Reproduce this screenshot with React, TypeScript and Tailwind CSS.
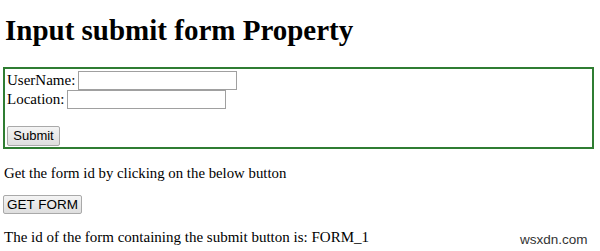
import React from "react";

export default function App() {
  return (
    <div className="relative w-[600px] h-[251px] bg-white overflow-hidden text-black" style={{ fontFamily: '"Liberation Serif", "Times New Roman", serif' }}>
      <div className="pl-[4px] pt-[14px]">
        <h1 className="text-[29px] font-bold leading-[32px] pl-[1px] m-0">Input submit form Property</h1>
        <div className="mt-[21px] ml-[-1px] w-[591px] h-[82px] border-2 border-[#2f7d32] px-[2px] pt-[2px] text-[15px] leading-[19px]">
          <div className="flex items-center h-[19px]">
            <span>UserName:</span>
            <input className="ml-[3px] w-[159px] h-[19px] border border-[#a0a0a0] bg-white" />
          </div>
          <div className="flex items-center h-[19px]">
            <span>Location:</span>
            <input className="ml-[3px] w-[159px] h-[19px] border border-[#a0a0a0] bg-white" />
          </div>
          <div className="h-[17px]" />
          <button className="h-[20px] w-[53px] border border-[#a9a9a9] rounded-[2px] bg-gradient-to-b from-[#f4f4f4] to-[#dedede] text-[13px] leading-[18px] text-black" style={{ fontFamily: '"Liberation Sans", Arial, sans-serif' }}>Submit</button>
        </div>
        <p className="mt-[15px] text-[14.8px] leading-[19px]">Get the form id by clicking on the below button</p>
        <button className="mt-[12px] h-[19px] w-[79px] ml-[-1px] border border-[#a9a9a9] rounded-[2px] bg-gradient-to-b from-[#f4f4f4] to-[#dedede] text-[13.5px] leading-[17px] text-black" style={{ fontFamily: '"Liberation Sans", Arial, sans-serif' }}>GET FORM</button>
        <p className="mt-[12px] text-[15px] leading-[19px]">The id of the form containing the submit button is: FORM_1</p>
      </div>
      <div className="absolute left-[520px] top-[232px] text-[13.5px] text-[#333] leading-[16px]" style={{ fontFamily: '"Liberation Sans", Arial, sans-serif' }}>wsxdn.com</div>
    </div>
  );
}
